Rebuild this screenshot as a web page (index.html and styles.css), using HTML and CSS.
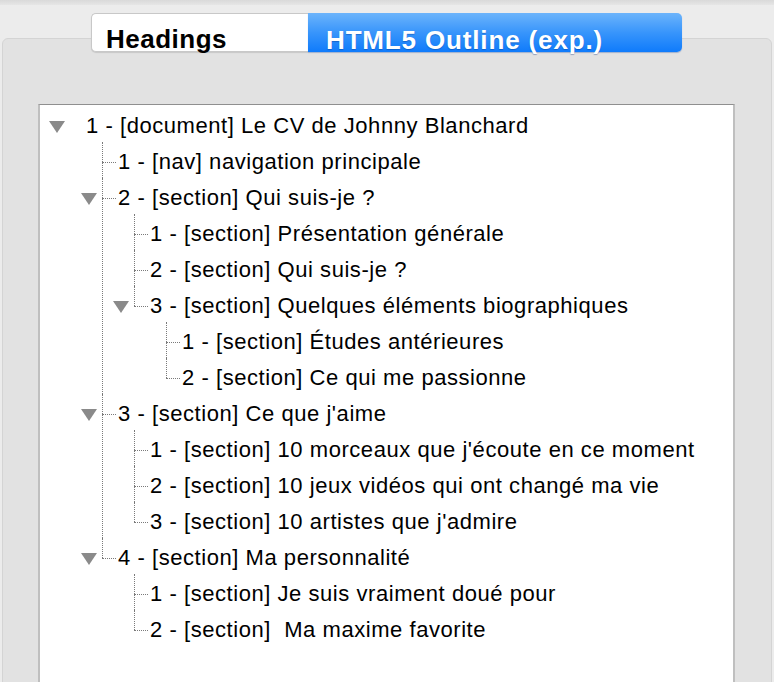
FILE: index.html
```html
<!DOCTYPE html>
<html lang="fr">
<head>
<meta charset="utf-8">
<title>Outline</title>
<link rel="stylesheet" href="styles.css">
</head>
<body>
<div class="window">
  <div class="topstrip"></div>
  <div class="tabs">
    <div class="tab tab-off">Headings</div>
    <div class="tab tab-on">HTML5 Outline (exp.)</div>
  </div>
  <div class="panel">
    <div class="treebox">
      <ul class="tree">
        <li class="node">
          <div class="row"><span class="tog"></span>1 - [document] Le CV de Johnny Blanchard</div>
          <ul class="kids">
            <li><div class="row">1 - [nav] navigation principale</div></li>
            <li>
              <div class="row"><span class="tog"></span>2 - [section] Qui suis-je ?</div>
              <ul class="kids">
                <li><div class="row">1 - [section] Présentation générale</div></li>
                <li><div class="row">2 - [section] Qui suis-je ?</div></li>
                <li>
                  <div class="row"><span class="tog"></span>3 - [section] Quelques éléments biographiques</div>
                  <ul class="kids">
                    <li><div class="row">1 - [section] Études antérieures</div></li>
                    <li><div class="row">2 - [section] Ce qui me passionne</div></li>
                  </ul>
                </li>
              </ul>
            </li>
            <li>
              <div class="row"><span class="tog"></span>3 - [section] Ce que j'aime</div>
              <ul class="kids">
                <li><div class="row">1 - [section] 10 morceaux que j'écoute en ce moment</div></li>
                <li><div class="row">2 - [section] 10 jeux vidéos qui ont changé ma vie</div></li>
                <li><div class="row">3 - [section] 10 artistes que j'admire</div></li>
              </ul>
            </li>
            <li>
              <div class="row"><span class="tog"></span>4 - [section] Ma personnalité</div>
              <ul class="kids">
                <li><div class="row">1 - [section] Je suis vraiment doué pour</div></li>
                <li><div class="row">2 - [section]&nbsp; Ma maxime favorite</div></li>
              </ul>
            </li>
          </ul>
        </li>
      </ul>
    </div>
  </div>
</div>
</body>
</html>
```

FILE: styles.css
```css
* { box-sizing: border-box; }
html, body {
  margin: 0;
  padding: 0;
  width: 774px;
  height: 682px;
  overflow: hidden;
  background: #ececec;
  font-family: "Liberation Sans", Arial, sans-serif;
}
.window {
  height: 682px;
  overflow: hidden;
  background: #ececec;
}
.topstrip {
  height: 5px;
  background: linear-gradient(#d9d9d9, #e6e6e6);
}
.tabs {
  position: relative;
  z-index: 2;
  display: flex;
  margin: 8px 0 0 91px;
  width: 591px;
  height: 39px;
}
.tab {
  display: flex;
  align-items: flex-end;
  height: 100%;
  font-weight: bold;
  font-size: 26px;
  line-height: 24px;
  padding-bottom: 0;
  letter-spacing: 0.5px;
  white-space: nowrap;
}
.tab-off {
  width: 217px;
  padding-left: 14px;
  background: #fff;
  color: #000;
  border: 1px solid #c8c8c8;
  border-right: none;
  border-radius: 5px 0 0 5px;
  box-shadow: 0 1px 1px rgba(0,0,0,0.12);
}
.tab-on {
  flex: 1;
  padding-left: 18px;
  letter-spacing: 0.85px;
  color: #fff;
  background: linear-gradient(#6cb4fb, #3895fb 50%, #0f7bfb);
  border-radius: 0 5px 5px 0;
  box-shadow: 0 1px 1px rgba(0,60,160,0.3);
  text-shadow: 0 1px 1px rgba(0,40,120,0.35);
}
.panel {
  position: relative;
  z-index: 1;
  margin: -14px 2px 0 2px;
  height: 700px;
  background: #e2e2e2;
  border: 1px solid #d4d4d4;
  border-radius: 6px 6px 0 0;
  padding: 65px 36px 0 35px;
}
.treebox {
  background: #fff;
  height: 620px;
  border-top: 1px solid #8f8f8f;
  border-left: 2px solid #bfbfbf;
  border-right: 2px solid #bfbfbf;
  padding-top: 3px;
}
.tree, .kids {
  list-style: none;
  margin: 0;
  padding: 0;
}
.tree > li {
  padding-left: 46px;
}
.row {
  position: relative;
  height: 36px;
  line-height: 36px;
  font-size: 22px;
  letter-spacing: 0.55px;
  color: #000;
  white-space: nowrap;
}
.tog {
  position: absolute;
  left: -37px;
  top: 13px;
  width: 0;
  height: 0;
  border-left: 8px solid transparent;
  border-right: 8px solid transparent;
  border-top: 12px solid #8a8a8a;
}
.kids {
  margin-left: 16px;
}
.kids > li {
  position: relative;
  padding-left: 16px;
}
.kids > li::before {
  content: "";
  position: absolute;
  left: 0;
  top: -2px;
  bottom: 0;
  border-left: 1px dotted #7a7a7a;
}
.kids > li:last-child::before {
  bottom: auto;
  height: 20px;
}
.kids > li::after {
  content: "";
  position: absolute;
  left: 0;
  top: 18px;
  width: 14px;
  border-top: 1px dotted #7a7a7a;
}
```
